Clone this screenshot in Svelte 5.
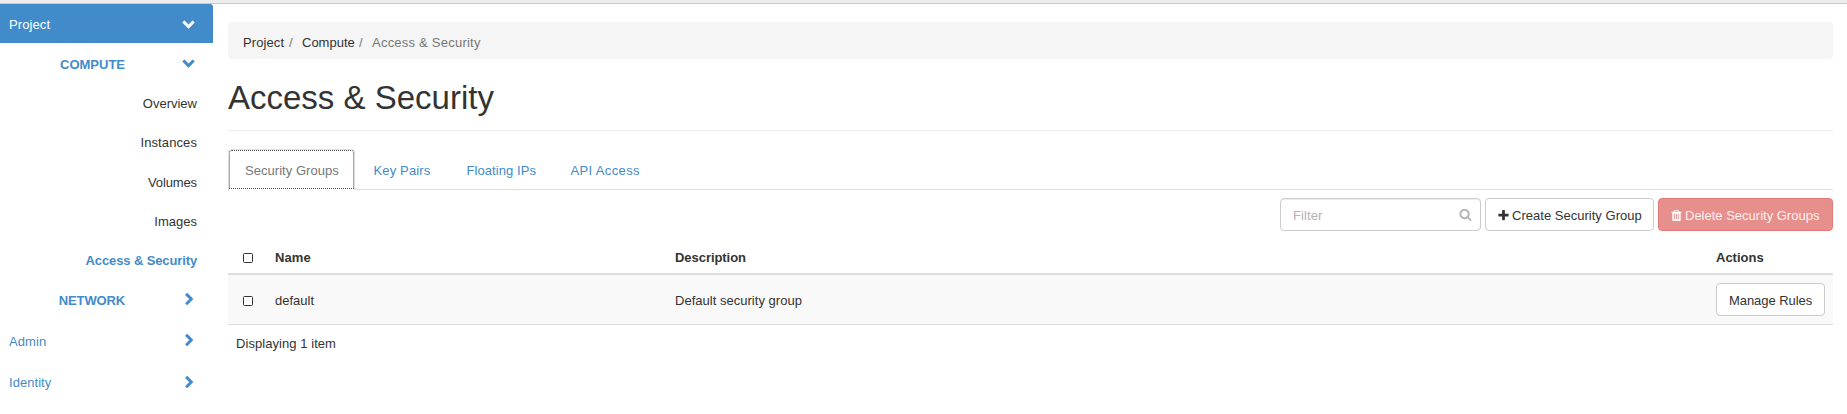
<script>
  const nav = [
    { label: 'Project', kind: 'panel open', icon: 'down', height: 39, top: 13, track: 0.1 },
    { label: 'COMPUTE', kind: 'group', icon: 'down', height: 39, top: 12, track: 0 },
    { label: 'Overview', kind: 'leaf', height: 39, track: 0 },
    { label: 'Instances', kind: 'leaf', height: 40, track: 0.1 },
    { label: 'Volumes', kind: 'leaf', height: 39, track: -0.12 },
    { label: 'Images', kind: 'leaf', height: 39, track: 0 },
    { label: 'Access & Security', kind: 'leaf current', height: 40, track: -0.12 },
    { label: 'NETWORK', kind: 'group', icon: 'right', height: 41, top: 13, track: -0.14 },
    { label: 'Admin', kind: 'panel', icon: 'right', height: 41, top: 13, track: 0.1 },
    { label: 'Identity', kind: 'panel', icon: 'right', height: 41, top: 14, track: 0.05 }
  ];
  const tabs = [
    { label: 'Security Groups', width: 127, track: 0.04 },
    { label: 'Key Pairs', width: 93, track: 0.15 },
    { label: 'Floating IPs', width: 104, track: 0.08 },
    { label: 'API Access', width: 102, track: 0.36 }
  ];
  const icons = {
    down: 'M1683 808l-742 741q-19 19-45 19t-45-19l-742-741q-19-19-19-45.5t19-45.5l166-165q19-19 45-19t45 19l531 531 531-531q19-19 45-19t45 19l166 165q19 19 19 45.5t-19 45.5z',
    right: 'M1363 877l-742 742q-19 19-45 19t-45-19l-166-166q-19-19-19-45t19-45l531-531-531-531q-19-19-19-45t19-45l166-166q19-19 45-19t45 19l742 742q19 19 19 45t-19 45z',
    plus: 'M1600 736v192q0 40-28 68t-68 28h-416v416q0 40-28 68t-68 28h-192q-40 0-68-28t-28-68v-416h-416q-40 0-68-28t-28-68v-192q0-40 28-68t68-28h416v-416q0-40 28-68t68-28h192q40 0 68 28t28 68v416h416q40 0 68 28t28 68z',
    search: 'M1216 832q0-185-131.5-316.5t-316.5-131.5-316.5 131.5-131.5 316.5 131.5 316.5 316.5 131.5 316.5-131.5 131.5-316.5zm512 832q0 52-38 90t-90 38q-54 0-90-38l-343-342q-179 124-399 124-143 0-273.5-55.5t-225-150-150-225-55.5-273.5 55.5-273.5 150-225 225-150 273.5-55.5 273.5 55.5 225 150 150 225 55.5 273.5q0 220-124 399l343 343q37 37 37 90z',
    trash: 'M704 1376v-704q0-14-9-23t-23-9h-64q-14 0-23 9t-9 23v704q0 14 9 23t23 9h64q14 0 23-9t9-23zm256 0v-704q0-14-9-23t-23-9h-64q-14 0-23 9t-9 23v704q0 14 9 23t23 9h64q14 0 23-9t9-23zm256 0v-704q0-14-9-23t-23-9h-64q-14 0-23 9t-9 23v704q0 14 9 23t23 9h64q14 0 23-9t9-23zm-544-992h448l-48-117q-7-9-17-11h-317q-10 2-17 11zm928 32v64q0 14-9 23t-23 9h-96v948q0 83-47 143.5t-113 60.5h-832q-66 0-113-58.5t-47-141.5v-952h-96q-14 0-23-9t-9-23v-64q0-14 9-23t23-9h309l70-167q15-37 54-63t79-26h320q40 0 79 26t54 63l70 167h309q14 0 23 9t9 23z'
  };
</script>

{#snippet icon(name)}
  <svg class="icon {name}" viewBox="0 0 1792 1792" aria-hidden="true"><path d={icons[name]} /></svg>
{/snippet}

<div class="topbar"></div>
<div class="page">
  <nav class="sidebar">
    {#each nav as item}
      <a class="item {item.kind}" href="#top" style:height="{item.height}px" style:letter-spacing="{item.track}px">
        <span class="label">{item.label}</span>
        {#if item.icon}
          <span class="chevron {item.icon}-side" style:padding-top="{item.top}px">{@render icon(item.icon)}</span>
        {/if}
      </a>
    {/each}
  </nav>

  <main>
    <ol class="breadcrumb">
      <li class="b-project">Project</li>
      <li class="slash">/</li>
      <li class="b-compute">Compute</li>
      <li class="slash">/</li>
      <li class="b-current">Access &amp; Security</li>
    </ol>
    <h1>Access &amp; Security</h1>

    <div class="tabs">
      {#each tabs as tab, i}
        <a class="tab" class:active={i === 0} href="#top" style:width="{tab.width}px" style:letter-spacing="{tab.track}px">{tab.label}</a>
      {/each}
    </div>

    <div class="toolbar">
      <div class="filter"><span>Filter</span>{@render icon('search')}</div>
      <button class="btn create">{@render icon('plus')}<span>Create Security Group</span></button>
      <button class="btn danger">{@render icon('trash')}<span>Delete Security Groups</span></button>
    </div>

    <div class="row head">
      <div class="check"><i></i></div>
      <div class="name">Name</div>
      <div class="desc">Description</div>
      <div class="actions">Actions</div>
    </div>
    <div class="row body">
      <div class="check"><i></i></div>
      <div class="name">default</div>
      <div class="desc">Default security group</div>
      <div class="actions"><button class="btn manage">Manage Rules</button></div>
    </div>
    <div class="footer">Displaying 1 item</div>
  </main>
</div>

<style>
  :global(body) {
    margin: 0;
    background: #fff;
    color: #333;
    font: 13px/19px "Liberation Sans", Arial, sans-serif;
  }
  a { color: #428bca; text-decoration: none; }
  .icon { display: block; width: 13px; height: 13px; flex: none; fill: currentColor; }
  .chevron .icon { overflow: visible; stroke: currentColor; stroke-width: 70; }
  .topbar { height: 3px; background: #ededed; border-bottom: 1px solid #c8c8c8; }
  .page { display: flex; height: 410px; overflow: hidden; }

  .sidebar { width: 213px; flex: none; }
  .item { display: flex; box-sizing: border-box; white-space: nowrap; }
  .label { padding-top: 11px; }
  .panel { padding-left: 9px; }
  .open { background: #428bca; color: #fff; border-radius: 0 3px 0 0; margin-bottom: 1px; }
  .group { font-weight: bold; }
  .group .label { width: 125px; text-align: right; }
  .leaf { justify-content: flex-end; padding-right: 16px; color: #333; }
  .current { color: #428bca; font-weight: bold; }
  .chevron { margin-left: auto; }
  .down-side { padding-right: 18px; }
  .right-side { padding-right: 17px; }

  main { width: 1605px; margin-left: 15px; }
  .breadcrumb {
    display: flex;
    box-sizing: border-box;
    height: 37px;
    margin: 18px 0 0;
    padding: 11px 15px;
    list-style: none;
    background: #f5f5f5;
    border-radius: 4px;
  }
  .b-project { width: 46px; letter-spacing: 0.1px; }
  .slash { width: 13px; color: #777; }
  .b-compute { width: 57px; }
  .b-current { color: #777; letter-spacing: 0.23px; }
  h1 {
    box-sizing: border-box;
    height: 72px;
    margin: 0;
    padding-top: 20px;
    border-bottom: 1px solid #eee;
    font-size: 33px;
    line-height: 38px;
    font-weight: normal;
    letter-spacing: 0;
  }

  .tabs { display: flex; height: 40px; margin-top: 18px; border-bottom: 1px solid #ddd; }
  .tab { box-sizing: border-box; height: 41px; padding: 12px 0 0 18.5px; white-space: nowrap; }
  .tab.active {
    padding: 11px 0 0 16px;
    color: #777;
    background: #fff;
    border: 1px solid #ddd;
    border-bottom: 0;
    border-radius: 4px 4px 0 0;
    outline: 1px dotted #555;
    outline-offset: -2px;
  }

  .toolbar { display: flex; justify-content: flex-end; gap: 4px; margin-top: 8px; }
  .filter, .btn {
    display: flex;
    box-sizing: border-box;
    height: 33px;
    border: 1px solid #ccc;
    border-radius: 4px;
    background: #fff;
    white-space: nowrap;
  }
  .btn { margin: 0; padding: 7px 0 0; color: #333; font: inherit; align-items: flex-start; }
  .btn .icon { margin-top: 3px; }
  .filter {
    width: 201px;
    padding: 7px 8.5px 0 12px;
    justify-content: space-between;
    color: #b3b3b3;
    letter-spacing: 0.1px;
    box-shadow: inset 0 1px 1px rgba(0, 0, 0, 0.075);
  }
  .filter .icon { margin-top: 2px; }
  .create { width: 169px; padding-left: 11px; letter-spacing: 0.02px; }
  .create span { margin-left: 2px; }
  .danger { width: 175px; padding-left: 11px; color: #fff; background: #e78f8c; border-color: #e47a77; }
  .danger span { margin-left: 2px; opacity: 0.88; }

  .row { display: grid; grid-template-columns: 47px 400px 1041px 1fr; box-sizing: border-box; }
  .head { height: 44px; padding-top: 17px; font-weight: bold; border-bottom: 2px solid #ddd; }
  .body { height: 50px; padding-top: 8px; background: #f9f9f9; border-bottom: 1px solid #ddd; }
  .body .name, .body .desc { padding-top: 8px; }
  .check { padding: 5px 0 0 15px; }
  .body .check { padding-top: 13px; }
  .check i {
    display: block;
    box-sizing: border-box;
    width: 10px;
    height: 10px;
    border: 1px solid #333;
    border-radius: 1.5px;
    background: #fff;
  }
  .head .name { letter-spacing: 0.1px; }
  .head .desc { letter-spacing: -0.05px; }
  .body .desc { letter-spacing: 0.02px; }
  .manage { width: 109px; padding-left: 12px; letter-spacing: -0.06px; }
  .footer { padding: 9px 0 0 8px; letter-spacing: 0.06px; }
</style>
